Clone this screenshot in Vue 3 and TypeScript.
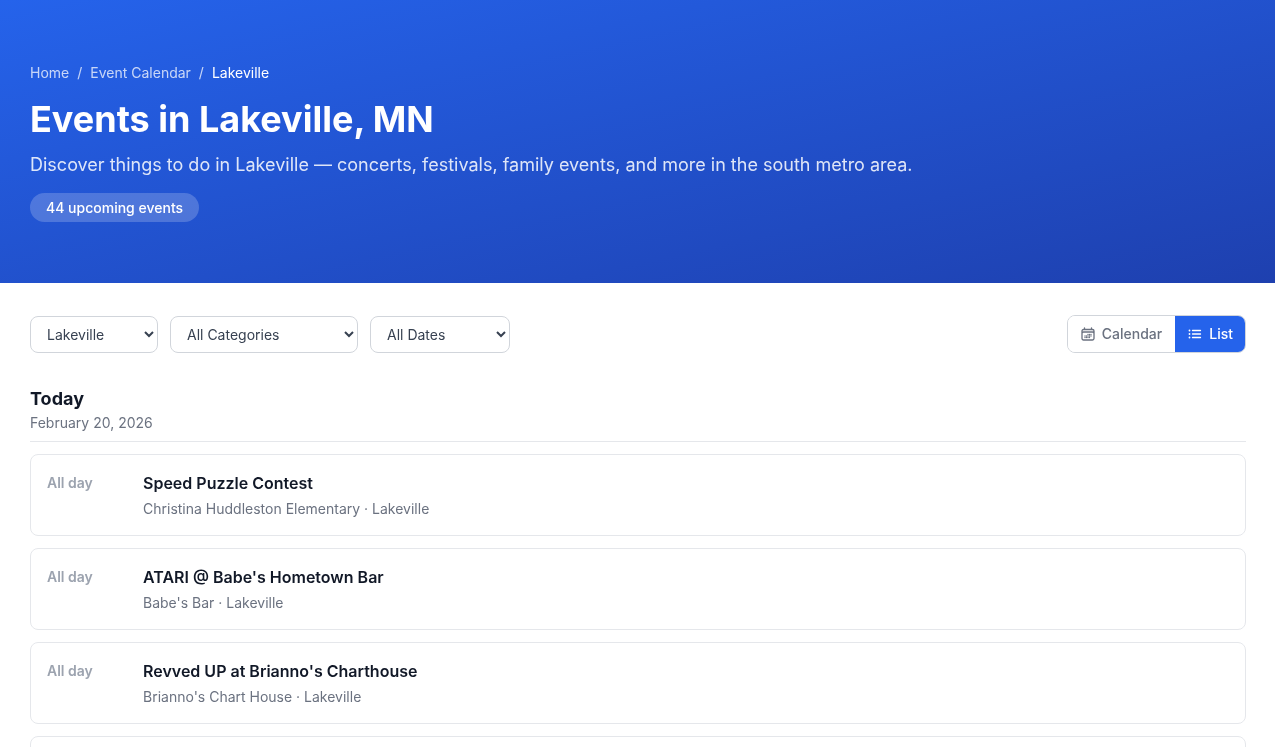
<script setup lang="ts">
interface EventItem { time: string; title: string; venue: string }
const events: EventItem[] = [
  { time: 'All day', title: 'Speed Puzzle Contest', venue: 'Christina Huddleston Elementary · Lakeville' },
  { time: 'All day', title: "ATARI @ Babe's Hometown Bar", venue: "Babe's Bar · Lakeville" },
  { time: 'All day', title: "Revved UP at Brianno's Charthouse", venue: "Brianno's Chart House · Lakeville" },
  { time: '', title: '', venue: '' },
]
</script>

<template>
  <div class="page">
    <header class="hero">
      <div class="wrap">
        <nav class="crumbs">
          <a>Home</a><span class="sep">/</span><a>Event Calendar</a><span class="sep">/</span><span class="current">Lakeville</span>
        </nav>
        <h1>Events in Lakeville, MN</h1>
        <p class="sub">Discover things to do in Lakeville — concerts, festivals, family events, and more in the south metro area.</p>
        <span class="badge">44 upcoming events</span>
      </div>
    </header>
    <main class="wrap content">
      <div class="toolbar">
        <div class="filters">
          <select class="s1"><option>Lakeville</option></select>
          <select class="s2"><option>All Categories</option></select>
          <select class="s3"><option>All Dates</option></select>
        </div>
        <div class="toggle">
          <button class="tbtn first">
            <svg width="16" height="16" viewBox="0 0 24 24" fill="none" stroke="currentColor" stroke-width="2" stroke-linecap="round" stroke-linejoin="round"><path d="M6.75 3v2.25M17.25 3v2.25M3 18.75V7.5a2.25 2.25 0 0 1 2.25-2.25h13.5A2.25 2.25 0 0 1 21 7.5v11.25m-18 0A2.25 2.25 0 0 0 5.25 21h13.5A2.25 2.25 0 0 0 21 18.75m-18 0v-7.5A2.25 2.25 0 0 1 5.25 9h13.5A2.25 2.25 0 0 1 21 11.25v7.5m-9-6h.008v.008H12v-.008ZM12 15h.008v.008H12V15Zm0 2.25h.008v.008H12v-.008ZM9.75 15h.008v.008H9.75V15Zm0 2.25h.008v.008H9.75v-.008ZM7.5 15h.008v.008H7.5V15Zm0 2.25h.008v.008H7.5v-.008Zm6.75-4.5h.008v.008h-.008v-.008Zm0 2.25h.008v.008h-.008V15Zm0 2.25h.008v.008h-.008v-.008Zm2.25-4.5h.008v.008H16.5v-.008Zm0 2.25h.008v.008H16.5V15Z"/></svg>
            Calendar
          </button>
          <button class="tbtn active">
            <svg width="16" height="16" viewBox="0 0 24 24" fill="none" stroke="currentColor" stroke-width="2" stroke-linecap="round" stroke-linejoin="round"><path d="M8.25 6.75h12M8.25 12h12m-12 5.25h12M3.75 6.75h.007v.008H3.75V6.75Zm.375 0a.375.375 0 1 1-.75 0 .375.375 0 0 1 .75 0ZM3.75 12h.007v.008H3.75V12Zm.375 0a.375.375 0 1 1-.75 0 .375.375 0 0 1 .75 0Zm-.375 5.25h.007v.008H3.75v-.008Zm.375 0a.375.375 0 1 1-.75 0 .375.375 0 0 1 .75 0Z"/></svg>
            List
          </button>
        </div>
      </div>
      <section>
        <div class="day">
          <h2>Today</h2>
          <div class="date">February 20, 2026</div>
        </div>
        <div class="list">
          <article v-for="(e, i) in events" :key="i" class="card">
            <div class="time">{{ e.time }}</div>
            <div>
              <div class="title">{{ e.title }}</div>
              <div class="venue">{{ e.venue }}</div>
            </div>
          </article>
        </div>
      </section>
    </main>
  </div>
</template>

<style>
html, body { margin: 0; background: #fff; }
</style>

<style scoped>
.page { font-family: Inter, "Liberation Sans", sans-serif; color: #111827; -webkit-font-smoothing: antialiased; will-change: transform; }
.wrap { width: 1216px; margin-left: 30px; }
.hero { background: linear-gradient(to bottom right, #2563eb 0%, #1e40af 100%); height: 283px; padding-top: 63px; box-sizing: border-box; color: #fff; }
.crumbs { font-size: 14px; line-height: 20px; color: rgba(255,255,255,.75); }
.sep { margin: 0 8px; }
.current { color: #fff; }
h1 { margin: 14px 0 0; font-size: 36px; line-height: 44px; font-weight: 700; }
.sub { margin: 10px 0 0; font-size: 18px; line-height: 28px; color: rgba(255,255,255,.85); }
.badge { display: inline-block; margin-top: 14px; padding: 0 16px; height: 29px; line-height: 29px; border-radius: 999px; background: rgba(255,255,255,.2); font-size: 14px; font-weight: 500; }
.content { padding-top: 32px; }
.toolbar { display: flex; justify-content: space-between; align-items: center; }
.filters { display: flex; gap: 12px; }
select { height: 37px; box-sizing: border-box; padding: 0 12px; border: 1px solid #d1d5db; border-radius: 8px; background: #fff; font: 14px Inter, sans-serif; color: #374151; }
.s1 { width: 128px; } .s2 { width: 188px; } .s3 { width: 140px; }
.toggle { display: flex; height: 38px; box-sizing: border-box; border: 1px solid #d1d5db; border-radius: 8px; overflow: hidden; }
.tbtn { display: flex; align-items: center; gap: 6px; border: 0; padding: 0 12px 1px; background: #fff; color: #6b7280; font: 500 14px Inter, sans-serif; }
.tbtn.first { padding-right: 13px; }
.tbtn.active { background: #2563eb; color: #fff; }
.day { margin-top: 34px; padding-bottom: 8px; border-bottom: 1px solid #e5e7eb; }
h2 { margin: 0; font-size: 18px; line-height: 24px; font-weight: 700; }
.date { margin-top: 2px; font-size: 14px; line-height: 20px; color: #6b7280; }
.list { display: flex; flex-direction: column; gap: 12px; margin-top: 12px; }
.card { display: flex; height: 82px; box-sizing: border-box; padding: 16px; border: 1px solid #e5e7eb; border-radius: 8px; background: #fff; }
.time { width: 96px; flex: none; font-size: 14px; font-weight: 600; line-height: 24px; color: #9ca3af; }
.title { font-size: 16px; line-height: 24px; font-weight: 600; color: #111827; }
.venue { margin-top: 4px; font-size: 14px; line-height: 20px; color: #6b7280; }
</style>
